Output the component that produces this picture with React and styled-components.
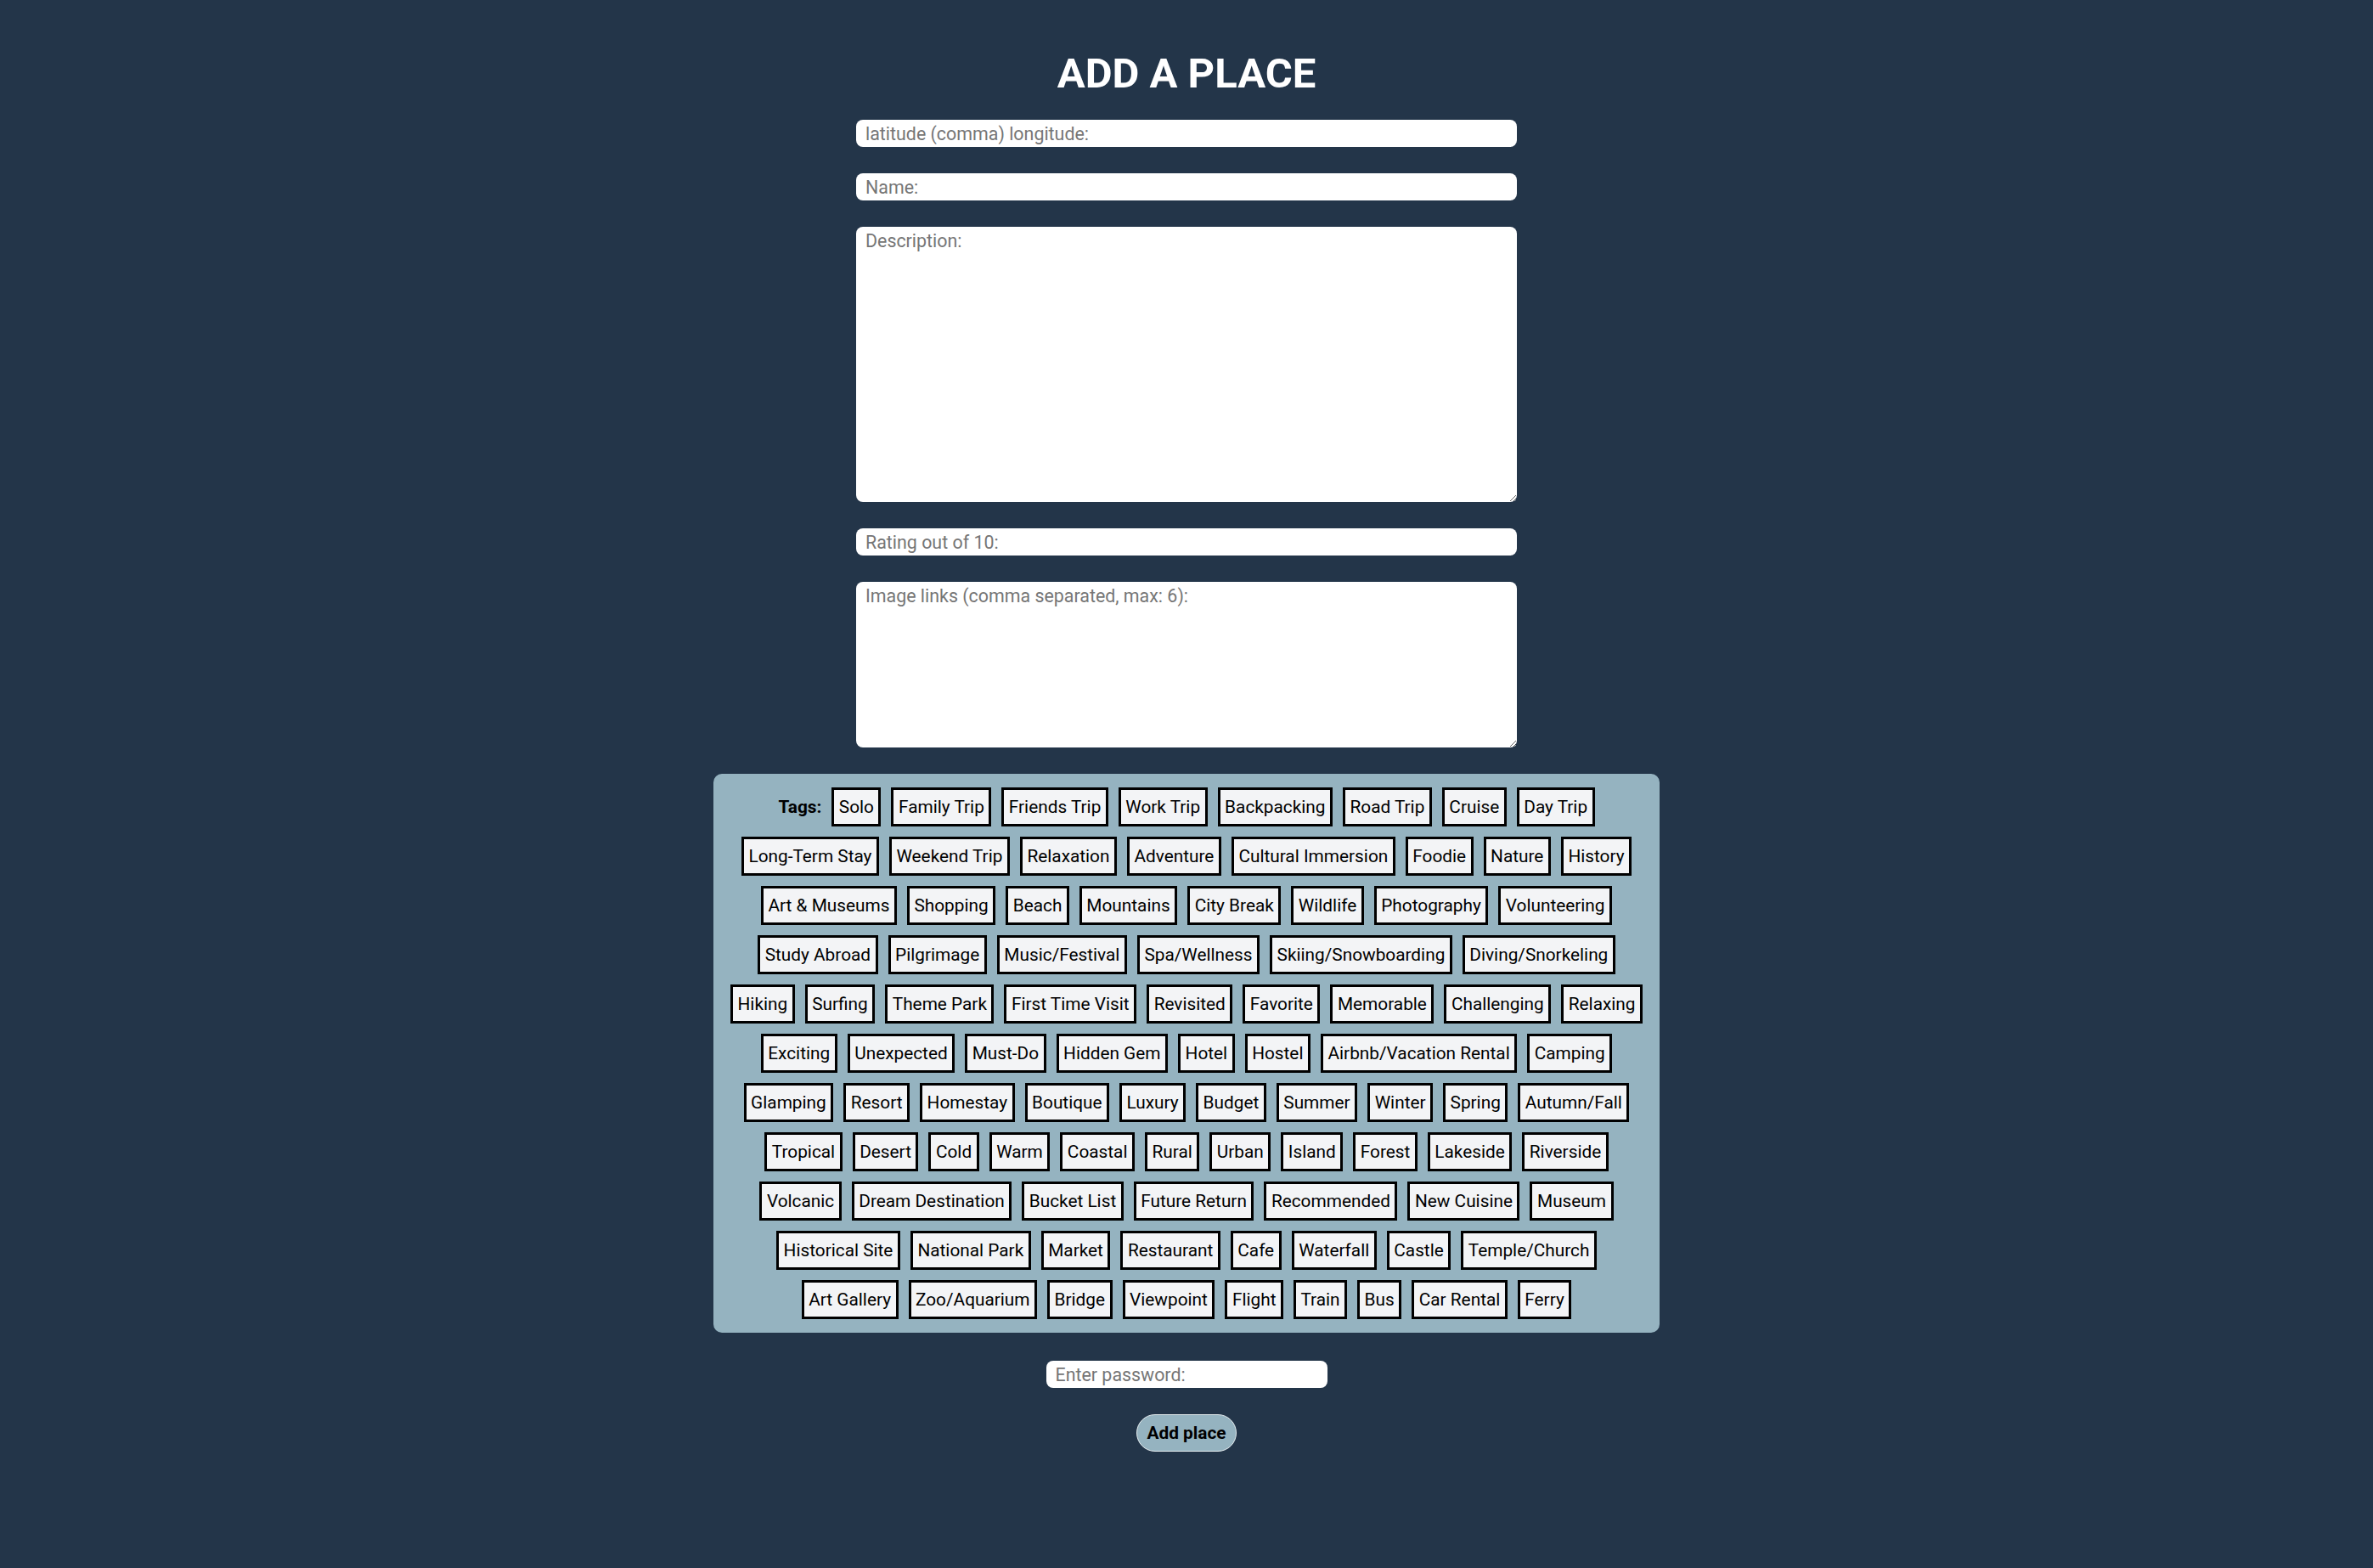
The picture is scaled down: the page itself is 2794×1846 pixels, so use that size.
import React from 'react';
import styled, { createGlobalStyle } from 'styled-components';

const TAG_ROWS = [
  ['Solo', 'Family Trip', 'Friends Trip', 'Work Trip', 'Backpacking', 'Road Trip', 'Cruise', 'Day Trip'],
  ['Long-Term Stay', 'Weekend Trip', 'Relaxation', 'Adventure', 'Cultural Immersion', 'Foodie', 'Nature', 'History'],
  ['Art & Museums', 'Shopping', 'Beach', 'Mountains', 'City Break', 'Wildlife', 'Photography', 'Volunteering'],
  ['Study Abroad', 'Pilgrimage', 'Music/Festival', 'Spa/Wellness', 'Skiing/Snowboarding', 'Diving/Snorkeling'],
  ['Hiking', 'Surfing', 'Theme Park', 'First Time Visit', 'Revisited', 'Favorite', 'Memorable', 'Challenging', 'Relaxing'],
  ['Exciting', 'Unexpected', 'Must-Do', 'Hidden Gem', 'Hotel', 'Hostel', 'Airbnb/Vacation Rental', 'Camping'],
  ['Glamping', 'Resort', 'Homestay', 'Boutique', 'Luxury', 'Budget', 'Summer', 'Winter', 'Spring', 'Autumn/Fall'],
  ['Tropical', 'Desert', 'Cold', 'Warm', 'Coastal', 'Rural', 'Urban', 'Island', 'Forest', 'Lakeside', 'Riverside'],
  ['Volcanic', 'Dream Destination', 'Bucket List', 'Future Return', 'Recommended', 'New Cuisine', 'Museum'],
  ['Historical Site', 'National Park', 'Market', 'Restaurant', 'Cafe', 'Waterfall', 'Castle', 'Temple/Church'],
  ['Art Gallery', 'Zoo/Aquarium', 'Bridge', 'Viewpoint', 'Flight', 'Train', 'Bus', 'Car Rental', 'Ferry'],
];

const GlobalStyle = createGlobalStyle`
  html, body {
    margin: 0;
    background: #233549;
    font-family: Roboto, "Liberation Sans", sans-serif;
  }
`;

const AddPlace = () => {
  return (
    <>
      <GlobalStyle />
      <Page>
        <Title>ADD A PLACE</Title>
        <Form onSubmit={(e) => e.preventDefault()}>
          <Field type="text" placeholder="latitude (comma) longitude:" />
          <Field type="text" placeholder="Name:" />
          <Area $height={324} placeholder="Description:" />
          <Field type="text" placeholder="Rating out of 10:" />
          <Area $height={195} placeholder="Image links (comma separated, max: 6):" />
          <TagPanel>
            {TAG_ROWS.map((row, i) => (
              <TagRow key={i}>
                {i === 0 && <TagsLabel>Tags:</TagsLabel>}
                {row.map((tag) => (
                  <Tag type="button" key={tag}>{tag}</Tag>
                ))}
              </TagRow>
            ))}
          </TagPanel>
          <Password type="password" placeholder="Enter password:" />
          <SubmitButton type="submit">Add place</SubmitButton>
        </Form>
      </Page>
    </>
  );
};

const Page = styled.main`
  display: flex;
  flex-direction: column;
  align-items: center;
  padding: 58px 0 136px;
`;

const Title = styled.h1`
  margin: 0 0 26px;
  font-size: 49px;
  font-weight: 700;
  line-height: normal;
  color: #ffffff;
`;

const Form = styled.form`
  display: flex;
  flex-direction: column;
  align-items: center;
  gap: 31px;
`;

const Field = styled.input`
  box-sizing: border-box;
  width: 778px;
  height: 32px;
  padding: 3px 11px;
  border: none;
  border-radius: 8px;
  background: #ffffff;
  font-family: Roboto, "Liberation Sans", sans-serif;
  font-size: 21.4px;
  color: #000;
  outline: none;
  &::placeholder {
    color: #767676;
  }
`;

const Password = styled(Field)`
  width: 331px;
  margin-top: 2px;
`;

const Area = styled.textarea`
  box-sizing: border-box;
  width: 778px;
  height: ${(p) => p.$height}px;
  padding: 4px 11px;
  border: none;
  border-radius: 8px;
  background: #ffffff;
  font-family: Roboto, "Liberation Sans", sans-serif;
  font-size: 21.4px;
  line-height: normal;
  outline: none;
  &::placeholder {
    color: #767676;
  }
`;

const TagPanel = styled.div`
  box-sizing: border-box;
  width: 1114px;
  padding: 16px 0;
  background: #95b3c0;
  border-radius: 10px;
  display: flex;
  flex-direction: column;
  gap: 12px;
`;

const TagRow = styled.div`
  display: flex;
  justify-content: center;
  align-items: center;
  gap: 12px;
`;

const TagsLabel = styled.span`
  font-size: 20.8px;
  font-weight: 700;
  color: #000;
`;

const Tag = styled.button`
  box-sizing: border-box;
  height: 46px;
  padding: 0 5.5px;
  border: 3px solid #000;
  border-radius: 0;
  background: #f3f4f6;
  font-family: Roboto, "Liberation Sans", sans-serif;
  font-size: 20.8px;
  color: #000;
  cursor: pointer;
`;

const SubmitButton = styled.button`
  box-sizing: border-box;
  height: 44px;
  padding: 0 12px;
  border: 1.5px solid #e4ecef;
  border-radius: 22px;
  background: #95b3c0;
  font-family: Roboto, "Liberation Sans", sans-serif;
  font-size: 20.8px;
  font-weight: 700;
  color: #000;
  cursor: pointer;
`;

export default AddPlace;
